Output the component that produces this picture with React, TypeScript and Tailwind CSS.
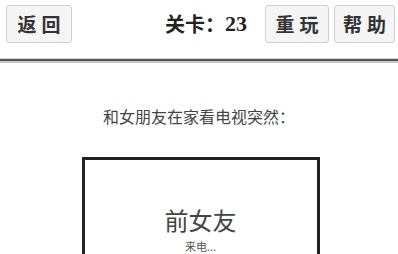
import React from 'react';

const btn =
  'h-[38px] flex items-center justify-center rounded-[3px] border border-[#cfcfcf] bg-[#f5f5f5] text-[19px] font-bold text-[#333] tracking-[5px]';

export default function App() {
  return (
    <div
      className="w-[398px] h-[254px] overflow-hidden bg-white"
      style={{ fontFamily: '"Noto Sans CJK SC", "Noto Sans", sans-serif' }}
    >
      {/* Top bar */}
      <div className="flex items-start pt-[5px] pl-[6px] pr-[3px]">
        <button className={`${btn} w-[66px] pl-[5px]`}>返回</button>
        <div className="flex-1" />
        <div className="h-[38px] flex items-center text-[20px] font-bold text-[#222] mr-[18px] leading-none">
          <span>关卡：</span>
          <span className="font-['Liberation_Serif',serif] text-[22px]">23</span>
        </div>
        <div className="flex gap-[5px]">
          <button className={`${btn} w-[64px] pl-[5px]`}>重玩</button>
          <button className={`${btn} w-[61px] pl-[5px]`}>帮助</button>
        </div>
      </div>

      {/* Divider */}
      <div className="mt-[15px]">
        <div className="h-px bg-[#d8d8d8]" />
        <div className="h-[2px] bg-[#555]" />
        <div className="h-[2px] bg-[#c8c8c8]" />
      </div>

      {/* Content */}
      <div className="flex flex-col items-center">
        <p className="mt-[45px] text-[16px] text-[#444] leading-none">和女朋友在家看电视突然：</p>
        <div className="mt-[33px] ml-[3px] w-[238px] h-[140px] border-[3px] border-[#222] flex flex-col items-center">
          <div className="mt-[48px] text-[24px] text-[#444] leading-none">前女友</div>
          <div className="mt-[9px] text-[11px] text-[#555] leading-none">来电...</div>
        </div>
      </div>
    </div>
  );
}
